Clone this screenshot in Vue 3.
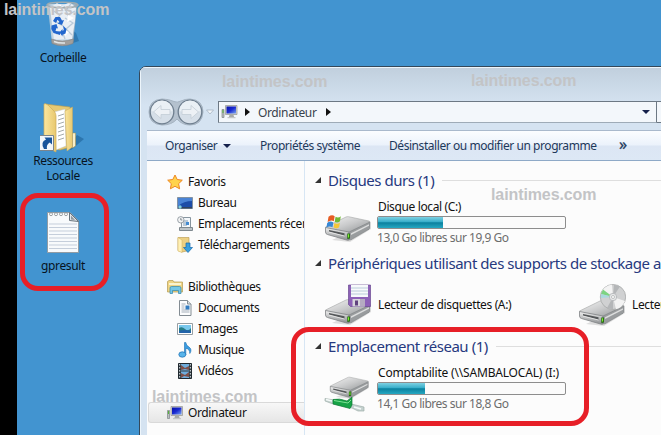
<template>
  <div class="desktop">
    <svg class="defs" width="0" height="0" aria-hidden="true">
      <defs>
        <linearGradient id="metal" x1="0" y1="0" x2="1" y2="1">
          <stop offset="0" stop-color="#f5f5f5" />
          <stop offset=".5" stop-color="#c9cacb" />
          <stop offset="1" stop-color="#909395" />
        </linearGradient>
        <linearGradient id="front" x1="0" y1="0" x2="0" y2="1">
          <stop offset="0" stop-color="#f1f1f1" />
          <stop offset="1" stop-color="#8a8d8f" />
        </linearGradient>
        <linearGradient id="folder" x1="0" y1="0" x2="1" y2="0">
          <stop offset="0" stop-color="#fbe69e" />
          <stop offset="1" stop-color="#e8c86f" />
        </linearGradient>
        <linearGradient id="screen" x1="0" y1="0" x2="1" y2="1">
          <stop offset="0" stop-color="#0610a8" />
          <stop offset=".5" stop-color="#1a2bd2" />
          <stop offset="1" stop-color="#7aa6f2" />
        </linearGradient>
        <linearGradient id="bin" x1="0" y1="0" x2="1" y2="0">
          <stop offset="0" stop-color="#a7bdce" />
          <stop offset=".3" stop-color="#e8eff5" />
          <stop offset=".7" stop-color="#d3dfe9" />
          <stop offset="1" stop-color="#8ba1b2" />
        </linearGradient>
        <symbol id="computer" viewBox="0 0 16 16">
          <path d="M0.5 5.5h2v8h-2z" fill="#b9bdc0" stroke="#7e8588" stroke-width=".7" />
          <path d="M1 6h1v3h-1z" fill="#55b43a" />
          <path d="M4 1.5h11.5v9H4z" fill="#d4d5d2" stroke="#92948f" stroke-width=".7" />
          <path d="M5 2.5h9.5v7H5z" fill="url(#screen)" />
          <path d="M8 11h4l.6 2H7.4z" fill="#a7aaa9" />
          <path d="M6 13h8v1.2H6z" fill="#c3c6c6" />
        </symbol>
        <!-- disk body shared by all the drives -->
        <symbol id="disk" viewBox="0 0 48 30">
          <path d="M8 28 L26 30 L47 17 L44 12z" fill="#999" opacity=".3" />
          <path d="M1.500 15 L22 5 Q23 4.500 24.500 4.700 L45 9 Q46.500 9.500 45.500 10.500 L27 20 Q25.500 20.500 24 20.300 L2 16.500z" fill="url(#metal)" stroke="#a2a4a5" stroke-width=".6" />
          <path d="M1.500 15.500 L25 20 V28 Q24 28.400 22.500 28 L3.500 22.500 Q1.500 22 1.500 20z" fill="url(#front)" stroke="#808385" stroke-width=".8" />
          <path d="M25 20 L46 10 V15.500 Q46 16.500 45 17.200 L27 27.800 L25 28z" fill="#999c9e" stroke="#7e8183" stroke-width=".6" />
          <path d="M27 21.300 L45 12.300 V13.800 L27 23z" fill="#dcdddd" />
          <path d="M5 18 L20.500 21.300 V23.700 L5 19.700z" fill="#55585a" />
          <path d="M5 20 L20.500 24" stroke="#f1f1f1" stroke-width=".8" />
          <path d="M23.300 21.500h2.700v5l-2.700.5z" fill="#246812" />
          <path d="M24 22.300h1.100v3.200h-1.100z" fill="#7bee2e" />
        </symbol>
      </defs>
    </svg>

    <div class="edge"></div>

    <div class="shortcuts">
      <div class="shortcut bin">
        <svg width="36" height="46" viewBox="0 0 36 46">
          <path d="M22 44 L34 40 L31 32 L26 28z" fill="#1d5f94" opacity=".5" />
          <path d="M2.500 3 L7 42 Q17 47 28 42 L32.500 3z" fill="url(#bin)" opacity=".92" />
          <path d="M5 7 L12 2 L17 5 L25 1 L31 7 L30 20 L27 38 L9 38z" fill="#e9eff5" />
          <path d="M7 9 L15 14 L10 20 L18 25 M19 5 L23 14 L30 10 M20 17 L28 22 L21 28 L27 34 M11 33 L17 30 L20 38 M26 3 L20 10" stroke="#b9cad9" stroke-width="1.300" fill="none" />
          <path d="M15 3 L19 9 L13 10z M23 14 L29 17 L22 21z M19 29 L24 31 L20 35z" fill="#fff" />
          <path d="M8 20 L10.500 16 L15 16 L17 19.500 L19 19 L17 24 L12.500 22.500 L14.500 21 L12.500 18.800 L11 22z M6.500 24.500 L11.500 23 L13 27.500 L11.500 27 L10.500 30 L15 30.500 V34 L8.500 32 L6.300 28z M18 24.500 L21.500 28 L20.500 32.500 L17.500 33.700 V35.500 L14.500 31.500 L17.500 28 V30 L18.800 29z" fill="#2267ce" />
          <path d="M6.500 38 Q17 42 28.500 38 L28 42.500 Q17 47 7 42.500z" fill="#a39f9c" stroke="#7c8082" stroke-width=".6" />
          <path d="M9 40.500 Q14 42.500 20 42" stroke="#e2e7e9" stroke-width="1.500" fill="none" />
          <ellipse cx="17.500" cy="4" rx="15.500" ry="2.700" fill="none" stroke="#9fabaf" stroke-width="1.500" />
        </svg>
        <span>Corbeille</span>
      </div>

      <div class="shortcut folder">
        <svg width="46" height="50" viewBox="0 0 46 50">
          <path d="M31 47 L44 36 L37 32 L26 46z" fill="#1c5d92" opacity=".55" />
          <path d="M5 1 L30 4 L31 44 L20 47 L5 44z" fill="#e6c973" stroke="#b79a4d" stroke-width=".6" />
          <path d="M14 9 L25 6 L26 43 L16 47z" fill="#fff" stroke="#c2c4c4" stroke-width=".5" />
          <path d="M18 13 L24 11 M18 17 L24 15 M18 21 L24 19 M18 25 L24 23 M18 29 L24 27 M18 33 L24 31 M18 37 L24 35" stroke="#a5abac" stroke-width="1" />
          <path d="M25 8 L32.500 4 V44 L27 48z" fill="url(#folder)" stroke="#c7a95c" stroke-width=".5" />
          <path d="M32.500 30h3v13l-3 2z" fill="#f9efc9" stroke="#ad9047" stroke-width=".5" />
          <path d="M4 1 Q5 0 8 2 L14 8 Q16 10 16 13 V49 L4 43z" fill="url(#folder)" stroke="#cfae59" stroke-width=".7" />
          <path d="M-.5 32.500h14v15h-14z" fill="#f2f6fa" stroke="#7b858d" />
          <path d="M4 46 Q0 39 6 36.500 L4.500 34.500 H12 V41.500 L9.800 39.500 Q6 41.500 7 46z" fill="#18549a" />
        </svg>
        <span>Ressources<br />Locale</span>
      </div>

      <div class="shortcut note">
        <svg width="34" height="43" viewBox="0 0 34 43">
          <path d="M1.500 1.500 H24 L32.500 10 V41.500 H1.500z" fill="#f8fafc" stroke="#929ca4" />
          <path d="M3 13h28M3 16.500h28M3 20h28M3 23.500h28M3 27h28M3 30.500h28M3 34h28M3 37.500h28" stroke="#c5cedb" />
          <g fill="#fff" stroke="#838b91" stroke-width=".8">
            <circle v-for="n in 4" :key="n" :cx="n * 5" cy="3.200" r="1.500" />
          </g>
          <path d="M23.500 1.500 L32.500 10.500 L23.500 9.500z" fill="#dfe4e8" stroke="#69747d" />
          <path d="M25 8.500 L29 9 L25 4.500z" fill="#8e979e" />
        </svg>
        <span>gpresult</span>
      </div>
    </div>

    <div class="window">
      <div class="titlebar">
        <div class="nav">
          <svg width="66" height="28" viewBox="0 0 66 28">
            <path d="M14 1 Q21 1 26 3.500 Q29 5 33 3 Q37 1 42 1 Q55 2 55 14 Q54 27 42 27 Q34 27 29 21 Q24 27 14 27 Q1 26 1 14 Q1 2 14 1z" fill="#b4c1ce" stroke="#a5b3c1" />
            <g v-for="cx in [14, 42]" :key="cx">
              <circle :cx="cx" cy="14" r="11.800" fill="#d6dfe8" stroke="#6f7f8f" stroke-width="1.300" />
              <path :d="`M${cx - 10.500} 13a10.500 10.500 0 0 1 21 0q-10.500 4 -21 0`" fill="#eaf0f5" />
            </g>
            <path d="M5.500 14 L13 7.500 V11.500 H22 V16.500 H13 V20.500z" fill="#edf1f5" stroke="#c3cdd6" stroke-width=".8" />
            <path d="M50.500 14 L43 7.500 V11.500 H34 V16.500 H43 V20.500z" fill="#edf1f5" stroke="#c3cdd6" stroke-width=".8" />
            <path d="M58.500 12 H65.500 L62 16z" fill="#f3f7fb" stroke="#a7b4c2" stroke-width=".8" />
          </svg>
        </div>
        <div class="address">
          <svg width="17" height="16"><use href="#computer" /></svg>
          <i class="crumb"></i>
          <span>Ordinateur</span>
          <i class="crumb"></i>
          <i class="caret"></i>
        </div>
        <div class="search"></div>
      </div>

      <div class="toolbar">
        <span class="organise">Organiser<i class="caret"></i></span>
        <span class="props">Propriétés système</span>
        <span class="remove">Désinstaller ou modifier un programme</span>
        <span class="more">»</span>
      </div>

      <div class="body">
        <div class="sidebar">
          <div
            v-for="item in places"
            :key="item.label"
            class="place"
            :class="{ child: item.child, active: item.active, gap: item.gap }"
          >
            <svg width="16" height="16" viewBox="0 0 16 16">
              <path v-if="item.icon === 'star'" d="M8 1 L10.200 5.500 L15.300 6.200 L11.600 9.700 L12.600 14.800 L8 12.300 L3.400 14.800 L4.300 9.700 L.7 6.200 L5.800 5.500z" fill="#ffd34c" stroke="#ed8622" />
              <g v-else-if="item.icon === 'desk'">
                <path d="M.5 2.500h15v11H.5z" fill="#1d4da8" stroke="#8392a2" />
                <path d="M1 3h14v3Q7 6 1 11z" fill="#4a83d5" />
                <path d="M1 12h14v1.500H1z" fill="#32445f" />
                <circle cx="3" cy="12" r="1.700" fill="#83d1df" />
              </g>
              <g v-else-if="item.icon === 'recent'">
                <path d="M4.500 1.500h9v10h-9z" fill="#f3f7fa" stroke="#87959f" />
                <path d="M6 5h5M6 7h5M6 9h4" stroke="#839bb2" />
                <path d="M9 6h3v3H9z" fill="#438bd1" />
                <path d="M2.500 11.500h13v3h-13z" fill="#bcc3c7" stroke="#7f898f" />
                <circle cx="3.800" cy="3.800" r="3.200" fill="#f2f3f4" stroke="#858e95" stroke-width=".8" />
                <path d="M3.800 2v2h1.500" fill="none" stroke="#59656e" stroke-width=".7" />
              </g>
              <g v-else-if="item.icon === 'download'">
                <path d="M1 .5h11v13L5 15l-4-1.500z" fill="#ecd083" stroke="#b59648" stroke-width=".6" />
                <path d="M1 .5 L5 3 V15.500 L1 14z" fill="#fff0b5" stroke="#d2b25d" stroke-width=".5" />
                <path d="M9 6h4v4.500h2.500l-4.500 5-4.500-5H9z" fill="#38a0df" stroke="#1568ad" stroke-width=".7" />
              </g>
              <g v-else-if="item.icon === 'library'">
                <path d="M.5 2.500 L2 1.500h4l1 1.500h8.500v10H.5z" fill="#efd484" stroke="#b49b50" stroke-width=".7" />
                <path d="M2 4h12v2H2z" fill="#fbf4ce" />
                <path d="M3 14.500 V9 Q3 7.500 4.500 7.500h8Q14 7.500 14 9v5.500h-2.500v-3h-6v3z" fill="#75c7e5" stroke="#3287ad" stroke-width=".7" />
              </g>
              <g v-else-if="item.icon === 'doc'">
                <path d="M2.500.5h8l3.500 3.500v11.500H2.500z" fill="#fcfdfe" stroke="#838c93" />
                <path d="M10.500.5v3.500H14" fill="#dce3e8" stroke="#838c93" />
                <path d="M4.500 4h4M4.500 6h3M4.500 8h3M4.500 10h8M4.500 12h8" stroke="#a5afba" />
                <path d="M8.500 5.500h4v4h-4z" fill="#337cc1" />
              </g>
              <g v-else-if="item.icon === 'image'">
                <path d="M.5 2.500h15v11H.5z" fill="#fff" stroke="#969ea3" />
                <path d="M2 4h12v8H2z" fill="#79c8ed" />
                <path d="M2 7 Q5 5 8 8 T14 7v5H2z" fill="#267c85" />
                <path d="M2 10 Q8 8 14 10v2H2z" fill="#2364a9" />
              </g>
              <g v-else-if="item.icon === 'music'">
                <path d="M7.500 .5h1.300Q9 3.500 12 5q3.500 2.500.8 6.500 .2-4.300-4-5.300V13H7.500z" fill="#3b9de1" stroke="#1d6fb2" stroke-width=".6" />
                <ellipse cx="5.300" cy="12.500" rx="3.500" ry="2.700" fill="#58b4ea" stroke="#1d6fb2" stroke-width=".7" />
              </g>
              <g v-else-if="item.icon === 'video'">
                <path d="M1.500.5h13v15h-13z" fill="#303b42" stroke="#20292f" />
                <path d="M4 1h8v6.500H4zM4 8.500h8V15H4z" fill="#70addc" />
                <path d="M4 2l4 3 4-2v4l-4-1-4 1zM4 10l4 2 4-3v5l-5-1-3 2z" fill="#7e4f48" />
                <path d="M2.700 1v14M13.300 1v14" stroke="#e1e7ea" stroke-dasharray="1.500 1.500" />
              </g>
              <use v-else href="#computer" />
            </svg>
            <span>{{ item.label }}</span>
          </div>
        </div>

        <div class="content">
          <section>
            <h2><i class="fold"></i>Disques durs (1)</h2>
            <div class="drives">
              <div class="drive">
                <svg width="48" height="42" viewBox="0 0 48 42">
                  <use href="#disk" y="11" width="48" height="30" />
                  <g transform="translate(1 7) scale(.88)">
                    <path d="M4 10 Q8 7 11 9.500 L10 15 Q7 13 3 16z" fill="#e65c24" />
                    <path d="M12 10 Q15 12 18 9.500 L17 15 Q14 17.500 11 15.500z" fill="#72b936" />
                    <path d="M2.500 17 Q6 14 9.500 16.500 L8.500 22 Q5 20 1.500 22.500z" fill="#3888d4" />
                    <path d="M10.800 17 Q14 19 17 16.500 L16 22 Q13 24.500 9.700 22z" fill="#f5c638" />
                  </g>
                </svg>
                <div class="info">
                  <span class="name">Disque local (C:)</span>
                  <div class="gauge"><div :style="{ width: '65px' }"></div></div>
                  <span class="free">13,0 Go libres sur 19,9 Go</span>
                </div>
              </div>
            </div>
          </section>

          <section>
            <h2><i class="fold"></i>Périphériques utilisant des supports de stockage amovibles</h2>
            <div class="drives">
              <div class="drive">
                <svg width="48" height="42" viewBox="0 0 48 42">
                  <use href="#disk" y="11" width="48" height="30" />
                  <path d="M24.500 1h22v21.500h-20l-2-2z" fill="#8d61b7" stroke="#694790" stroke-width=".7" />
                  <path d="M27 1h17v12H27z" fill="#f7f9fb" />
                  <path d="M27 4h17M27 7h17M27 10h17" stroke="#bacbd9" />
                  <path d="M28.500 15h12v7.500h-12z" fill="#d8d6dc" />
                  <path d="M31 16.500h3v5h-3z" fill="#60427e" />
                  <path d="M36 15h5v7.500h-5z" fill="#b5abc1" />
                </svg>
                <span class="name">Lecteur de disquettes (A:)</span>
              </div>
              <div class="drive">
                <svg width="48" height="42" viewBox="0 0 48 42">
                  <use href="#disk" y="12" width="48" height="30" />
                  <ellipse cx="35" cy="13" rx="12.700" ry="12.500" fill="#d0d1d2" stroke="#a7a9aa" stroke-width=".8" />
                  <path d="M35 13 L24 7 Q28 1 34 .8z M35 13 L47 17 Q44 24 38 25.300z" fill="#f3f3f3" />
                  <path d="M35 13 L23 10 L25 5.500z" fill="#7dd482" />
                  <path d="M35 13 L23 14 L23 10z" fill="#a9d9de" />
                  <path d="M35 13 L36 .8 L42 2.500z M35 13 L29 24 L35 25.300z" fill="#b4b6b8" />
                  <circle cx="35" cy="13" r="3.700" fill="#e6e7e8" stroke="#abadb0" stroke-width=".7" />
                  <circle cx="35" cy="13" r="1.500" fill="#fff" stroke="#8d9091" stroke-width=".5" />
                </svg>
                <span class="name">Lecteur de DVD</span>
              </div>
            </div>
          </section>

          <section>
            <h2><i class="fold"></i>Emplacement réseau (1)</h2>
            <div class="drives">
              <div class="drive">
                <svg class="tall" width="48" height="46" viewBox="0 0 48 46">
                  <use href="#disk" x="5" y="7" width="41" height="26" />
                  <g transform="translate(0 5)">
                    <path d="M1 27.500 L10 29 L40 36 V40 L34 40 L28 37 L9 33 L1 30z" fill="#c5d1cf" stroke="#9fafab" stroke-width=".7" />
                    <path d="M9 28.500 Q15 27 23 30 L28 26 L28 34 L26 37.500 L9 33z" fill="#17a346" stroke="#0d7b34" stroke-width=".7" />
                    <path d="M10 29.500 L24 32 L27 29" stroke="#7ce293" fill="none" />
                    <path d="M2 28.500 L8 30 M30 36 L37 38" stroke="#f5faf9" stroke-width="1.500" />
                  </g>
                </svg>
                <div class="info">
                  <span class="name share">Comptabilite (\\SAMBALOCAL) (I:)</span>
                  <div class="gauge"><div :style="{ width: '47px' }"></div></div>
                  <span class="free">14,1 Go libres sur 18,8 Go</span>
                </div>
              </div>
            </div>
          </section>
        </div>
      </div>
    </div>

    <span v-for="n in 5" :key="n" class="mark" :class="'mark-' + n">laintimes.com</span>
    <div class="ring ring-file"></div>
    <div class="ring ring-network"></div>
  </div>
</template>

<script setup>
const places = [
  { label: "Favoris", icon: "star" },
  { label: "Bureau", icon: "desk", child: true },
  { label: "Emplacements récents", icon: "recent", child: true },
  { label: "Téléchargements", icon: "download", child: true },
  { label: "Bibliothèques", icon: "library", gap: true },
  { label: "Documents", icon: "doc", child: true },
  { label: "Images", icon: "image", child: true },
  { label: "Musique", icon: "music", child: true },
  { label: "Vidéos", icon: "video", child: true },
  { label: "Ordinateur", icon: "computer", gap: true, active: true },
];
</script>

<style>
body {
  margin: 0;
  overflow: hidden;
}
</style>

<style scoped>
.desktop {
  position: relative;
  display: flex;
  width: 661px;
  height: 435px;
  overflow: hidden;
  background: #4294d0;
  color: #111;
  font-family: "Noto Sans", "Open Sans", sans-serif;
  font-size: 12px;
  letter-spacing: -0.37px;
  white-space: nowrap;
}
.desktop svg {
  display: block;
  flex-shrink: 0;
}
.desktop .defs {
  position: absolute;
}
.edge {
  flex: 0 0 17px;
  background: #000;
}
.shortcuts {
  flex: 0 0 92px;
  box-sizing: border-box;
  padding-top: 1px;
}
.shortcut {
  display: flex;
  flex-direction: column;
  align-items: center;
  text-align: center;
  line-height: 15px;
  color: #07131e;
}
.bin {
  height: 102px;
}
.bin span {
  margin-top: 3px;
}
.folder {
  height: 108px;
}
.folder svg {
  margin-right: 1px;
}
.note span {
  margin-top: 4px;
}

/* explorer window */
.window {
  flex: 0 0 540px;
  box-sizing: border-box;
  height: 390px;
  margin: 66px 0 0 30px;
  border: 1px solid #34485a;
  border-radius: 7px 0 0 0;
  background: #d5e3f1;
  box-shadow: inset 1px 1px 0 #edf5fb;
  overflow: hidden;
}
.titlebar {
  display: flex;
  align-items: flex-start;
  box-sizing: border-box;
  height: 63px;
  padding: 31px 0 0 8px;
  background: linear-gradient(#c0cfdd, #d5e3f1 60%);
  box-shadow: inset 1px 1px 0 #edf5fb;
}
.address {
  display: flex;
  flex-shrink: 0;
  align-items: center;
  box-sizing: border-box;
  width: 439px;
  height: 22px;
  margin: 3px 0 0 4px;
  padding: 0 6px 0 2px;
  border: 1px solid #6c7884;
  border-bottom-color: #9eabb7;
  background: #f3f7fb;
  color: #39424c;
}
.address span {
  margin: 0 9px 0 8px;
}
.address .crumb {
  margin-left: 7px;
}
.address span + .crumb {
  margin-left: 0;
}
.address .caret {
  margin-left: auto;
}
.crumb {
  border: 4px solid transparent;
  border-left: 5px solid #111;
  border-right: 0;
}
.caret {
  border: 4px solid transparent;
  border-top-color: #14204b;
  border-bottom: 0;
}
.search {
  box-sizing: border-box;
  width: 30px;
  height: 22px;
  margin-top: 3px;
  border: solid #6c7884;
  border-width: 1px 0;
  background: #f3f7fb;
}
.toolbar {
  display: flex;
  box-sizing: border-box;
  height: 31px;
  margin-left: 7px;
  padding-left: 18px;
  border: 1px solid #a9b9cc;
  border-width: 1px 0;
  border-bottom-color: #8ea9c7;
  background: linear-gradient(#fbfdff, #ebf2fb 49%, #dce6f4 51%, #dde8f5);
  color: #1e395b;
  line-height: 29px;
  letter-spacing: -0.44px;
}
.organise {
  width: 95px;
}
.organise .caret {
  display: inline-block;
  margin: 0 0 2px 6px;
}
.props {
  width: 129px;
}
.remove {
  width: 230px;
}
.more {
  font-size: 16px;
  line-height: 26px;
  -webkit-text-stroke: 0.3px;
}
.body {
  display: flex;
  height: 296px;
  margin-left: 7px;
  background: #fcfcfc;
}
.sidebar {
  flex: 0 0 157px;
  box-sizing: border-box;
  padding: 10px 0 0 1px;
  overflow: hidden;
}
.place {
  display: flex;
  align-items: center;
  box-sizing: border-box;
  height: 21px;
  padding-left: 19px;
}
.place svg {
  margin-right: 5px;
}
.place.child {
  padding-left: 29px;
}
.place.gap {
  margin-top: 21px;
}
.place.active {
  padding-left: 18px;
  border: 1px solid #d9d9d9;
  border-right: 0;
  border-radius: 3px 0 0 3px;
  background: linear-gradient(#f7f7f7, #e6e6e6);
}
.content {
  flex: 1;
  padding-left: 10px;
  border-left: 1px solid #d7e6f4;
  overflow: hidden;
}
section {
  height: 83px;
}
h2 {
  display: flex;
  align-items: center;
  height: 20px;
  margin: 0;
  padding-top: 9px;
  color: #27397f;
  font-size: 15px;
  font-weight: 400;
  letter-spacing: -0.45px;
}
h2::after {
  content: "";
  flex: 1;
  height: 1px;
  margin-left: 8px;
  background: #dedede;
}
.fold {
  flex: 0 0 6px;
  height: 6px;
  margin-right: 7px;
  background: #333;
  clip-path: polygon(100% 0, 100% 100%, 0 100%);
}
.drives {
  display: flex;
  padding: 10px 0 0 9px;
}
.drive {
  display: flex;
  align-items: center;
  flex: 0 0 254px;
  height: 44px;
}
.drive svg {
  margin-right: 5px;
}
.drive .tall {
  margin-top: 2px;
}
.info {
  display: flex;
  flex-direction: column;
}
.name {
  padding-left: 1px;
  line-height: 16px;
}
.share {
  letter-spacing: -0.18px;
}
.gauge {
  box-sizing: border-box;
  width: 189px;
  height: 13px;
  margin: 1px 0;
  border: 1px solid #8d8d8d;
  border-radius: 2px;
  background: #fbfbfb;
  overflow: hidden;
}
.gauge div {
  height: 100%;
  background: linear-gradient(#7ed0e2, #35adc9 45%, #0b809e 52%, #25a8c2);
}
.free {
  color: #6d6d6d;
  line-height: 15px;
  letter-spacing: -0.48px;
}

/* overlays */
.mark {
  position: absolute;
  color: #c3c4c6;
  font: bold 16px/18px "Liberation Sans", sans-serif;
  letter-spacing: -0.1px;
}
.mark-1 {
  left: 4px;
  top: 1px;
}
.mark-2 {
  left: 222px;
  top: 73px;
}
.mark-3 {
  left: 471px;
  top: 72px;
}
.mark-4 {
  left: 491px;
  top: 186px;
}
.mark-5 {
  left: 152px;
  top: 388px;
}
.ring {
  position: absolute;
  box-sizing: border-box;
  border: 5px solid #e71f27;
  border-radius: 18px;
}
.ring-file {
  left: 20px;
  top: 193px;
  width: 89px;
  height: 98px;
}
.ring-network {
  left: 291px;
  top: 327px;
  width: 298px;
  height: 99px;
}
</style>
